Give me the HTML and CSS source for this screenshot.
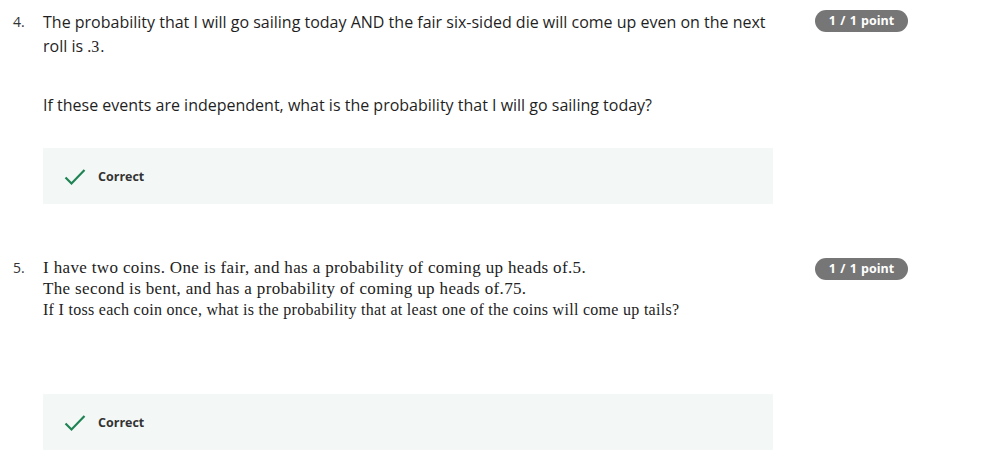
FILE: index.html
```html
<!DOCTYPE html>
<html>
<head>
<meta charset="utf-8">
<link rel="stylesheet" href="styles.css">
</head>
<body>
<div class="question q4">
  <div class="num">4.</div>
  <div class="content">
    <p class="line">The probability that I will go sailing today AND the fair six-sided die will come up even on the next roll is <span class="math">.3</span>.</p>
    <p class="line second">If these events are independent, what is the probability that I will go sailing today?</p>
    <div class="result">
      <svg class="check" width="22" height="18" viewBox="0 0 22 18"><path d="M1.5 9.5 L7.5 15.5 L20.5 2" fill="none" stroke="#1f8354" stroke-width="2.2"/></svg>
      <span class="label">Correct</span>
    </div>
  </div>
  <div class="badge">1 / 1 point</div>
</div>
<div class="question q5">
  <div class="num">5.</div>
  <div class="content">
    <div class="serif big">I have two coins. One is fair, and has a probability of coming up heads of.5.</div>
    <div class="serif big">The second is bent, and has a probability of coming up heads of.75.</div>
    <div class="serif small">If I toss each coin once, what is the probability that at least one of the coins will come up tails?</div>
    <div class="result result5">
      <svg class="check" width="22" height="18" viewBox="0 0 22 18"><path d="M1.5 9.5 L7.5 15.5 L20.5 2" fill="none" stroke="#1f8354" stroke-width="2.2"/></svg>
      <span class="label">Correct</span>
    </div>
  </div>
  <div class="badge">1 / 1 point</div>
</div>
</body>
</html>
```
FILE: styles.css
```css
body {
  margin: 0;
  background: #fff;
  font-family: "Open Sans", sans-serif;
  color: #1f1f1f;
}
.question {
  display: flex;
  align-items: flex-start;
  padding-left: 13px;
}
.q4 { padding-top: 10px; }
.q5 { padding-top: 53px; }
.num {
  width: 30px;
  font-size: 14px;
  line-height: 24px;
  color: #333;
}
.q5 .num { line-height: 22px; }
.content {
  width: 730px;
}
.line {
  margin: 0;
  font-size: 16px;
  line-height: 24px;
  width: 726px;
}
.second { margin-top: 34px; }
.math {
  font-family: "Liberation Serif", serif;
  font-size: 16px;
  margin-right: 1px;
}
.result {
  margin-top: 31px;
  height: 56px;
  background: #f3f8f6;
  display: flex;
  align-items: center;
  padding-left: 21px;
}
.result5 { margin-top: 73px; }
.check { margin-right: 12px; margin-top: 1px; }
.label {
  font-size: 12.5px;
  font-weight: 700;
  color: #333;
}
.serif {
  font-family: "Liberation Serif", serif;
  color: #222;
}
.big { font-size: 17px; line-height: 21px; letter-spacing: 0.36px; }
.small { font-size: 16px; line-height: 22px; letter-spacing: 0.29px; }
.badge {
  margin-left: 42px;
  width: 93px;
  height: 22px;
  border-radius: 11px;
  background: #767676;
  color: #fff;
  font-size: 12.5px;
  font-weight: 700;
  line-height: 22px;
  text-align: center;
  word-spacing: 1px;
}
.q5 .badge { margin-top: 1px; }
```
